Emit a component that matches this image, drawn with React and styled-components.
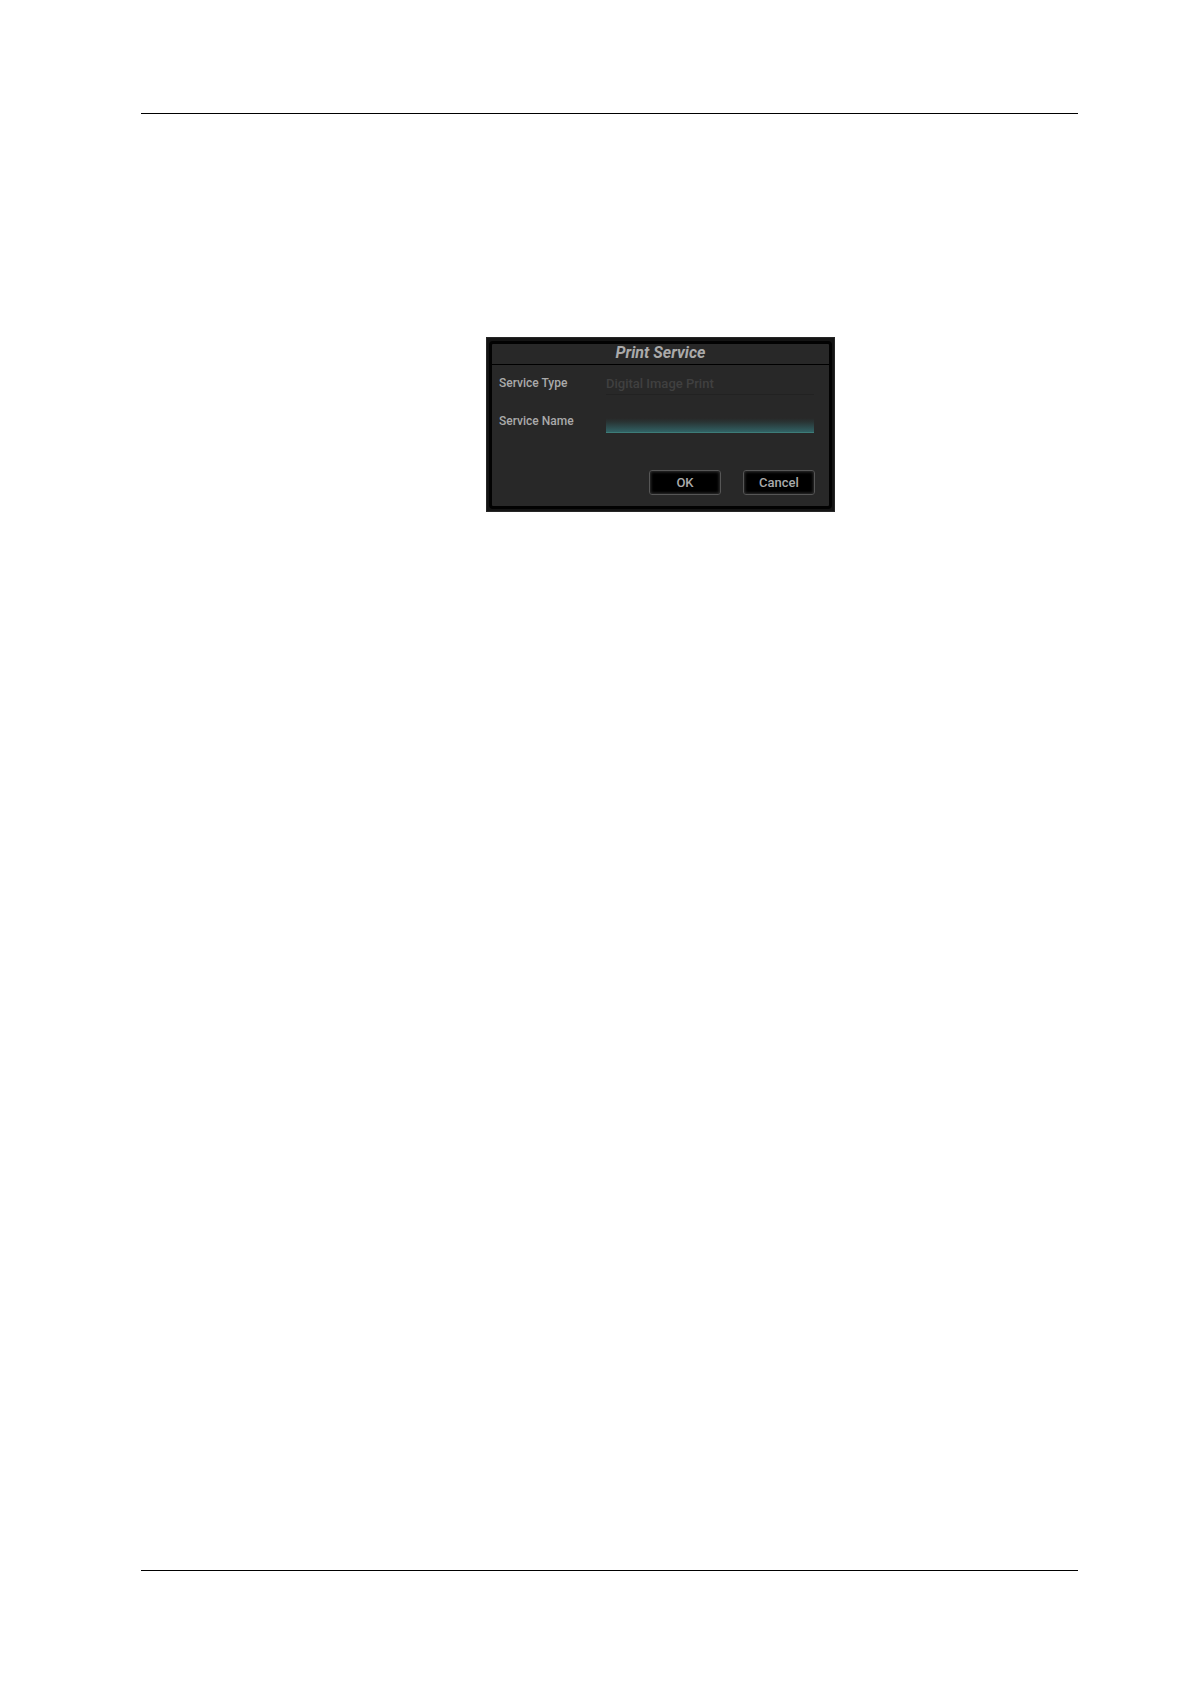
import React from "react";
import styled, { createGlobalStyle } from "styled-components";

const Base = createGlobalStyle`
  * { box-sizing: border-box; }
  body { margin: 0; background: #fff; font-family: Roboto, "Liberation Sans", sans-serif; }
`;

const Sheet = styled.div`
  min-height: 100vh;
  display: flex;
  flex-direction: column;
  padding: 113px 112px 113px 141px;
`;

const Body = styled.main`
  flex: 1;
  display: flex;
  justify-content: center;
  align-items: flex-start;
  padding: 223px 0 0 102px;
  border-top: 1px solid #000;
  border-bottom: 1px solid #000;
`;

const Dialog = styled.section`
  width: 349px;
  max-width: 100%;
  padding: 3px 2px 2px;
  border: 1px solid #262626;
  background: #141414;
`;

const Panel = styled.form`
  border: 3px solid #020202;
  border-radius: 4px;
  background: #282828;
  color: #aaa;
`;

const Title = styled.h1`
  margin: 0;
  height: 21px;
  border-bottom: 1px solid #000;
  font-size: 16px;
  line-height: 18px;
  font-style: italic;
  font-weight: 700;
  text-align: center;
`;

const Fields = styled.div`
  display: flex;
  flex-direction: column;
  gap: 10px;
  padding: 4px 15px 0 7px;
`;

const Field = styled.div`
  display: grid;
  grid-template-columns: 107px 1fr;
  align-items: start;
`;

const Label = styled.label`
  font-size: 12px;
  line-height: 28px;
  font-weight: 500;
`;

const TextBox = styled.input`
  width: 100%;
  height: 26px;
  padding: 0;
  border: 0;
  border-radius: 0;
  outline: 0;
  color: #aaa;
  background: linear-gradient(#282828 45%, #293434 60%, #316265 100%);
  border-bottom: 1px solid #3d7c78;
  font: 500 13px Roboto, "Liberation Sans", sans-serif;

  &:disabled {
    height: 23px;
    margin-top: 3px;
    color: #404040;
    background: none;
    border-bottom-color: #222;
  }
`;

const Actions = styled.div`
  display: flex;
  justify-content: flex-end;
  gap: 22px;
  padding: 35px 14px 11px;
`;

const Button = styled.button`
  width: 72px;
  height: 25px;
  padding: 0;
  border: 1px solid #565656;
  border-radius: 3px;
  background: #000;
  box-shadow: inset 0 0 3px 1px #303030;
  color: #aaa;
  font: 500 13px Roboto, "Liberation Sans", sans-serif;
`;

export default function App() {
  return (
    <>
      <Base />
      <Sheet>
        <Body>
          <Dialog role="dialog" aria-labelledby="dialog-title">
            <Panel onSubmit={(event) => event.preventDefault()}>
              <Title id="dialog-title">Print Service</Title>
              <Fields>
                <Field>
                  <Label htmlFor="service-type">Service Type</Label>
                  <TextBox id="service-type" defaultValue="Digital Image Print" disabled />
                </Field>
                <Field>
                  <Label htmlFor="service-name">Service Name</Label>
                  <TextBox id="service-name" />
                </Field>
              </Fields>
              <Actions>
                <Button type="submit">OK</Button>
                <Button type="button">Cancel</Button>
              </Actions>
            </Panel>
          </Dialog>
        </Body>
      </Sheet>
    </>
  );
}
